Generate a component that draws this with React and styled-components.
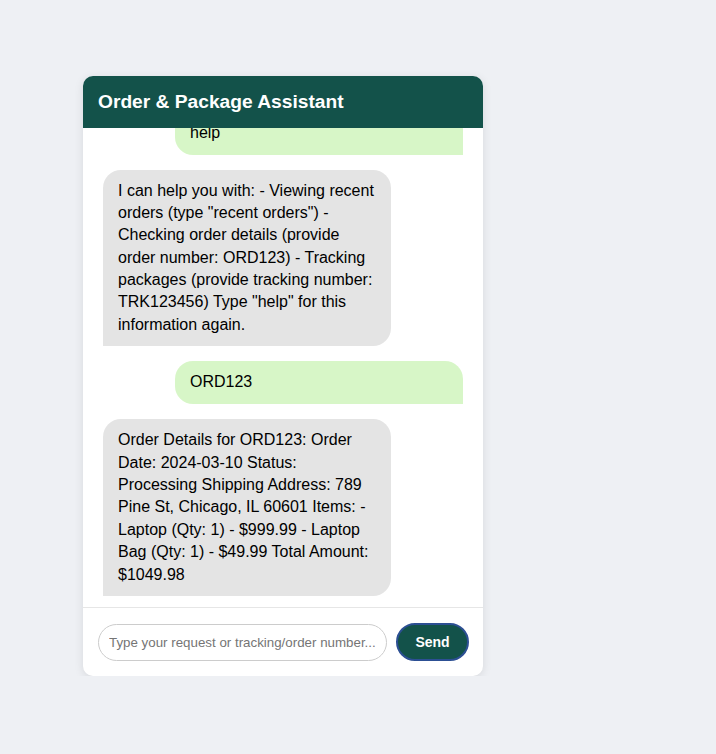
import React from "react";
import styled, { createGlobalStyle } from "styled-components";

const GlobalStyle = createGlobalStyle`
  html, body {
    margin: 0;
    background: #eef0f4;
    font-family: "Liberation Sans", Arial, sans-serif;
  }
  body {
    padding: 76px 0 0 83px;
  }
`;

const Chat = styled.div`
  width: 400px;
  height: 600px;
  background: #ffffff;
  border-radius: 10px;
  box-shadow: 0 2px 10px rgba(0, 0, 0, 0.1);
  display: flex;
  flex-direction: column;
  overflow: hidden;
`;

const Header = styled.div`
  background: #13524a;
  color: #ffffff;
  padding: 15px;
  height: 52px;
  box-sizing: border-box;
  font-size: 19.2px;
  font-weight: bold;
  line-height: 22px;
`;

const Messages = styled.div`
  flex: 1;
  min-height: 0;
  overflow: hidden;
  display: flex;
  flex-direction: column;
  justify-content: flex-end;
  gap: 15px;
  padding: 0 20px 11px;
`;

const Bubble = styled.div`
  flex-shrink: 0;
  max-width: 80%;
  box-sizing: border-box;
  padding: 10px 15px;
  font-size: 16px;
  line-height: 1.4;
  color: #000;
  align-self: ${(p) => (p.$user ? "flex-end" : "flex-start")};
  width: ${(p) => (p.$user ? "80%" : "auto")};
  min-height: ${(p) => (p.$user ? "43px" : "0")};
  background: ${(p) => (p.$user ? "#d7f6c7" : "#e4e4e4")};
  border-radius: ${(p) => (p.$user ? "18px 18px 0 18px" : "18px 18px 18px 0")};
`;

const InputBar = styled.div`
  border-top: 1px solid #e6e6e6;
  padding: 15px 14px 15px 15px;
  display: flex;
  align-items: center;
  gap: 9px;
`;

const Input = styled.input`
  flex: 1;
  height: 37px;
  box-sizing: border-box;
  border: 1px solid #cccccc;
  border-radius: 20px;
  padding: 0 10px;
  font-size: 13.33px;
  font-family: "Liberation Sans", Arial, sans-serif;
  outline: none;
  &::placeholder {
    color: #757575;
  }
`;

const SendButton = styled.button`
  width: 73px;
  height: 38px;
  border: 2px solid #2c4f93;
  border-radius: 20px;
  background: #13524a;
  color: #ffffff;
  font-size: 14px;
  font-weight: bold;
  font-family: "Liberation Sans", Arial, sans-serif;
  cursor: pointer;
`;

const messages = [
  { user: true, text: "help" },
  {
    user: false,
    text: 'I can help you with: - Viewing recent orders (type "recent orders") - Checking order details (provide order number: ORD123) - Tracking packages (provide tracking number: TRK123456) Type "help" for this information again.',
  },
  { user: true, text: "ORD123" },
  {
    user: false,
    text: "Order Details for ORD123: Order Date: 2024-03-10 Status: Processing Shipping Address: 789 Pine St, Chicago, IL 60601 Items: - Laptop (Qty: 1) - $999.99 - Laptop Bag (Qty: 1) - $49.99 Total Amount: $1049.98",
  },
];

export default function App() {
  return (
    <>
      <GlobalStyle />
      <Chat>
        <Header>Order &amp; Package Assistant</Header>
        <Messages>
          {messages.map((m, i) => (
            <Bubble key={i} $user={m.user}>
              {m.text}
            </Bubble>
          ))}
        </Messages>
        <InputBar>
          <Input placeholder="Type your request or tracking/order number..." />
          <SendButton>Send</SendButton>
        </InputBar>
      </Chat>
    </>
  );
}
